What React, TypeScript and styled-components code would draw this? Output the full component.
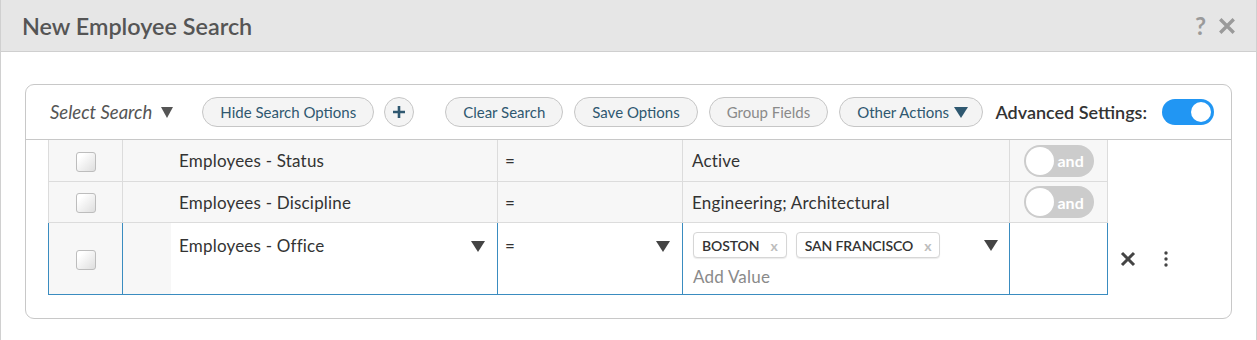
import React from "react";
import styled, { createGlobalStyle } from "styled-components";

const Global = createGlobalStyle`
  html, body { margin: 0; padding: 0; background: #fff; }
  body { font-family: Lato, "Liberation Sans", sans-serif; color: #333; }
  * { box-sizing: border-box; }
`;

const Dialog = styled.div`
  width: 1257px;
  height: 340px;
  border-left: 1px solid #d0d0d0;
  border-right: 1px solid #d0d0d0;
  background: #fff;
`;

const Header = styled.div`
  height: 52px;
  background: #e6e6e6;
  border-bottom: 1px solid #cfcfcf;
  display: flex;
  align-items: center;
  justify-content: space-between;
  padding: 0 20px 0 21px;
`;

const Title = styled.h1`
  margin: 0;
  font-size: 23.4px;
  font-weight: 600;
  color: #555;
`;

const HeaderIcons = styled.div`
  display: flex;
  align-items: center;
  gap: 12px;
  color: #9a9a9a;
  font-weight: 700;
  font-size: 24px;
`;

const Body = styled.div`
  padding: 32px 24px 0 24px;
`;

const Panel = styled.div`
  border: 1px solid #c8c8c8;
  border-radius: 9px;
  padding-bottom: 23px;
`;

const Toolbar = styled.div`
  height: 55px;
  border-bottom: 1px solid #c8c8c8;
  display: flex;
  align-items: center;
  padding: 0 17px 0 24px;
  white-space: nowrap;
  & > * {
    flex: none;
  }
`;

const SelectSearch = styled.div`
  font-style: italic;
  font-size: 18.5px;
  color: #555;
  display: flex;
  align-items: center;
  gap: 9px;
  margin-right: 29px;
`;

const Caret = styled.span<{ $size?: number; $color?: string }>`
  display: inline-block;
  flex: none;
  width: 0;
  height: 0;
  border-left: ${(p) => (p.$size ?? 13) / 2}px solid transparent;
  border-right: ${(p) => (p.$size ?? 13) / 2}px solid transparent;
  border-top: ${(p) => ((p.$size ?? 13) * 0.85).toFixed(1)}px solid ${(p) => p.$color ?? "#555"};
`;

const PillButton = styled.button<{ $muted?: boolean; $gap?: number; $padRight?: number }>`
  height: 30px;
  padding: 0 ${(p) => p.$padRight ?? 17}px 0 17px;
  border: 1px solid #c6c6c6;
  border-radius: 15px;
  background: #f4f4f4;
  color: ${(p) => (p.$muted ? "#8a8a8a" : "#2f5870")};
  font-family: inherit;
  font-size: 15px;
  display: inline-flex;
  align-items: center;
  gap: 5px;
  margin-right: ${(p) => p.$gap ?? 11}px;
  white-space: nowrap;
`;

const CircleButton = styled.button`
  width: 30px;
  height: 30px;
  border: 1px solid #c6c6c6;
  border-radius: 50%;
  background: #f4f4f4;
  color: #2f5870;
  padding: 0;
  display: inline-flex;
  align-items: center;
  justify-content: center;
  margin-right: 31px;
`;

const AdvLabel = styled.span`
  font-size: 18px;
  font-weight: 600;
  color: #333;
  margin-left: auto;
  margin-right: 15px;
`;

const Switch = styled.div`
  width: 52px;
  height: 26px;
  border-radius: 13px;
  background: #2196f3;
  display: flex;
  align-items: center;
  justify-content: flex-end;
  padding: 0 3px;
`;

const Knob = styled.div<{ $size: number }>`
  width: ${(p) => p.$size}px;
  height: ${(p) => p.$size}px;
  border-radius: 50%;
  background: #fff;
  flex: none;
`;

const TableArea = styled.div`
  display: flex;
  align-items: center;
  padding-left: 22px;
`;

const Table = styled.table`
  border-collapse: collapse;
  table-layout: fixed;
  width: 1060px;
  font-size: 17px;
  letter-spacing: 0.2px;
  color: #333;
`;

const Row = styled.tr<{ $active?: boolean }>`
  background: ${(p) => (p.$active ? "#fff" : "#f7f7f7")};
  & > td {
    border: 1px solid ${(p) => (p.$active ? "#3a8cc0" : "#dcdcdc")};
  }
  &:first-child > td {
    border-top: none;
  }
`;

const Cell = styled.td<{ $grey?: boolean }>`
  padding: 0;
  vertical-align: top;
  background: ${(p) => (p.$grey ? "#f7f7f7" : "transparent")};
`;

const CheckCell = styled(Cell)`
  vertical-align: middle;
  text-align: center;
`;

const Checkbox = styled.span`
  display: inline-block;
  width: 20px;
  height: 20px;
  border: 1px solid #bdbdbd;
  border-radius: 3px;
  background: linear-gradient(135deg, #ffffff 20%, #dedede 100%);
  vertical-align: middle;
`;

const FieldWrap = styled.div<{ $h: number }>`
  display: flex;
  height: ${(p) => p.$h}px;
`;

const Indent = styled.div`
  width: 48px;
  flex: none;
  background: #f7f7f7;
`;

const CellText = styled.div<{ $pad?: number; $top?: number }>`
  flex: 1;
  display: flex;
  align-items: flex-start;
  justify-content: space-between;
  padding: ${(p) => p.$top ?? 9}px 12px 0 ${(p) => p.$pad ?? 8}px;
  line-height: 22px;
  white-space: nowrap;
`;

const ValueWrap = styled.div`
  padding: 9px 11px 0 10px;
  display: flex;
  flex-direction: column;
  gap: 9px;
`;

const ChipsLine = styled.div`
  display: flex;
  align-items: flex-start;
  gap: 9px;
  height: 26px;
`;

const Chip = styled.span`
  height: 26px;
  display: inline-flex;
  align-items: center;
  gap: 11px;
  padding: 0 8px 0 8px;
  border: 1px solid #d6d6d6;
  border-radius: 4px;
  background: #fff;
  box-shadow: 0 1px 1px rgba(0, 0, 0, 0.08);
  font-size: 14px;
  font-weight: 600;
  color: #333;
  letter-spacing: -0.1px;
`;

const ChipX = styled.span`
  color: #bdbdbd;
  font-weight: 700;
  font-size: 14px;
`;

const Placeholder = styled.div`
  color: #8a8a8a;
  font-size: 17px;
  line-height: 20px;
`;

const AndCell = styled(Cell)`
  vertical-align: middle;
  text-align: center;
`;

const AndToggle = styled.div`
  display: inline-flex;
  align-items: center;
  width: 70px;
  height: 32px;
  border-radius: 16px;
  background: #cccccc;
  padding: 0 2px;
  gap: 4px;
  vertical-align: middle;
  letter-spacing: 0;
`;

const AndText = styled.span`
  color: #fff;
  font-weight: 700;
  font-size: 16px;
`;

const RowActions = styled.div`
  display: flex;
  align-items: center;
  gap: 28px;
  margin-left: 12px;
  color: #444;
`;

const Spacer = styled.div`
  flex: 1;
`;

const RowOuter = styled.div`
  display: flex;
  align-items: flex-end;
`;

const ActionsHolder = styled.div`
  display: flex;
  flex-direction: column;
  justify-content: flex-end;
  height: 155px;
  padding-bottom: 28px;
`;

const CloseIcon = ({ size, color, stroke }: { size: number; color: string; stroke: number }) => (
  <svg width={size} height={size} viewBox="0 0 16 16">
    <path d="M2 2 L14 14 M14 2 L2 14" stroke={color} strokeWidth={stroke} strokeLinecap="butt" />
  </svg>
);

const Dots = () => (
  <svg width="4" height="16" viewBox="0 0 4 16">
    <circle cx="2" cy="2" r="1.7" fill="#444" />
    <circle cx="2" cy="8" r="1.7" fill="#444" />
    <circle cx="2" cy="14" r="1.7" fill="#444" />
  </svg>
);

const Plus = () => (
  <svg width="14" height="14" viewBox="0 0 14 14">
    <path d="M7 1 V13 M1 7 H13" stroke="#2f5870" strokeWidth="2.6" />
  </svg>
);

export default function App() {
  return (
    <>
      <Global />
      <Dialog>
        <Header>
          <Title>New Employee Search</Title>
          <HeaderIcons>
            <span>?</span>
            <CloseIcon size={18} color="#9a9a9a" stroke={3} />
          </HeaderIcons>
        </Header>
        <Body>
          <Panel>
            <Toolbar>
              <SelectSearch>
                Select Search <Caret $size={13} $color="#555" />
              </SelectSearch>
              <PillButton $gap={10}>Hide Search Options</PillButton>
              <CircleButton>
                <Plus />
              </CircleButton>
              <PillButton>Clear Search</PillButton>
              <PillButton>Save Options</PillButton>
              <PillButton $muted>Group Fields</PillButton>
              <PillButton $padRight={14}>
                Other Actions <Caret $size={14} $color="#2f5870" />
              </PillButton>
              <AdvLabel>Advanced Settings:</AdvLabel>
              <Switch>
                <Knob $size={20} />
              </Switch>
            </Toolbar>
            <RowOuter>
              <TableArea>
                <Table>
                  <colgroup>
                    <col style={{ width: 74 }} />
                    <col style={{ width: 375 }} />
                    <col style={{ width: 185 }} />
                    <col style={{ width: 327 }} />
                    <col style={{ width: 98 }} />
                  </colgroup>
                  <tbody>
                    <Row>
                      <CheckCell>
                        <Checkbox />
                      </CheckCell>
                      <Cell>
                        <FieldWrap $h={41}>
                          <Indent />
                          <CellText $top={10}>Employees - Status</CellText>
                        </FieldWrap>
                      </Cell>
                      <Cell>
                        <CellText $pad={7} $top={10}>=</CellText>
                      </Cell>
                      <Cell>
                        <CellText $pad={9} $top={10}>Active</CellText>
                      </Cell>
                      <AndCell>
                        <AndToggle>
                          <Knob $size={28} />
                          <AndText>and</AndText>
                        </AndToggle>
                      </AndCell>
                    </Row>
                    <Row>
                      <CheckCell>
                        <Checkbox />
                      </CheckCell>
                      <Cell>
                        <FieldWrap $h={40}>
                          <Indent />
                          <CellText $top={10}>Employees - Discipline</CellText>
                        </FieldWrap>
                      </Cell>
                      <Cell>
                        <CellText $pad={7} $top={10}>=</CellText>
                      </Cell>
                      <Cell>
                        <CellText $pad={9} $top={10}>Engineering; Architectural</CellText>
                      </Cell>
                      <AndCell>
                        <AndToggle>
                          <Knob $size={28} />
                          <AndText>and</AndText>
                        </AndToggle>
                      </AndCell>
                    </Row>
                    <Row $active>
                      <CheckCell $grey>
                        <Checkbox />
                      </CheckCell>
                      <Cell>
                        <FieldWrap $h={71}>
                          <Indent />
                          <CellText $top={12}>
                            Employees - Office <Caret $size={14} $color="#444" style={{ marginTop: 6 }} />
                          </CellText>
                        </FieldWrap>
                      </Cell>
                      <Cell>
                        <CellText $pad={7} $top={12}>
                          = <Caret $size={14} $color="#444" style={{ marginTop: 6 }} />
                        </CellText>
                      </Cell>
                      <Cell>
                        <ValueWrap>
                          <ChipsLine>
                            <Chip>
                              BOSTON <ChipX>x</ChipX>
                            </Chip>
                            <Chip>
                              SAN FRANCISCO <ChipX>x</ChipX>
                            </Chip>
                            <Spacer />
                            <Caret $size={14} $color="#444" style={{ marginTop: 8 }} />
                          </ChipsLine>
                          <Placeholder>Add Value</Placeholder>
                        </ValueWrap>
                      </Cell>
                      <Cell />
                    </Row>
                  </tbody>
                </Table>
              </TableArea>
              <ActionsHolder>
                <RowActions>
                  <CloseIcon size={16} color="#444" stroke={3} />
                  <Dots />
                </RowActions>
              </ActionsHolder>
            </RowOuter>
          </Panel>
        </Body>
      </Dialog>
    </>
  );
}
